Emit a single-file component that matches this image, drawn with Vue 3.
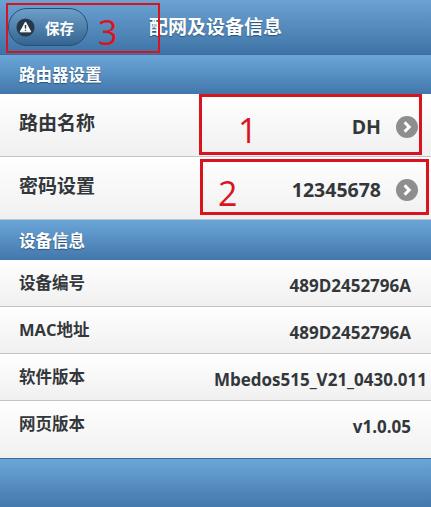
<template>
  <div class="page">
    <header class="top-bar">
      <button class="save-btn">
        <svg class="warn" viewBox="0 0 20 20" width="19" height="19">
          <circle cx="10" cy="10" r="9.5" fill="#26384c" />
          <path d="M10 4.2 15.6 14.6H4.4Z" fill="#fff" stroke="#fff" stroke-width="1" stroke-linejoin="round" />
          <path d="M10 7.4V11M10 12.3V13.5" stroke="#26384c" stroke-width="1.5" />
        </svg>
        <span>保存</span>
      </button>
      <h1>配网及设备信息</h1>
    </header>

    <div class="section">路由器设置</div>
    <div class="row big" v-for="item in routerRows" :key="item.label">
      <span class="label">{{ item.label }}</span>
      <span class="value">{{ item.value }}</span>
      <svg class="arrow" viewBox="0 0 22 22" width="22" height="22">
        <circle cx="11" cy="11" r="11" fill="#8e8e8e" />
        <path d="M8.6 6.4 13.2 11 8.6 15.6" fill="none" stroke="#fff" stroke-width="3" />
      </svg>
    </div>

    <div class="section second">设备信息</div>
    <div class="row small" v-for="item in deviceRows" :key="item.label" :class="item.cls">
      <span class="label">{{ item.label }}</span>
      <span class="value">{{ item.value }}</span>
    </div>

    <div class="footer"></div>

    <div class="mark mark-1"><span>1</span></div>
    <div class="mark mark-2"><span>2</span></div>
    <div class="mark mark-3"><span>3</span></div>
  </div>
</template>

<script setup>
const routerRows = [
  { label: '路由名称', value: 'DH' },
  { label: '密码设置', value: '12345678' }
]

const deviceRows = [
  { label: '设备编号', value: '489D2452796A' },
  { label: 'MAC地址', value: '489D2452796A' },
  { label: '软件版本', value: 'Mbedos515_V21_0430.011', cls: 'wide' },
  { label: '网页版本', value: 'v1.0.05', cls: 'last' }
]
</script>

<style>
html, body {
  margin: 0;
  background: #fff;
}
</style>

<style scoped>
.page {
  position: relative;
  width: 431px;
  height: 507px;
  overflow: hidden;
  font-family: "Open Sans", "Noto Sans CJK SC", sans-serif;
  font-weight: 700;
  color: #33373a;
}

.top-bar {
  height: 55px;
  box-sizing: border-box;
  padding-left: 8px;
  display: flex;
  align-items: center;
  background: linear-gradient(#6ba3d3, #3f73a6);
  border-bottom: 1px solid #3c6a99;
}

.top-bar h1 {
  margin: 0 0 2px 61px;
  font-size: 19px;
  font-weight: 700;
  color: #fff;
  text-shadow: 0 1px 1px #2d5478;
}

.save-btn {
  width: 80px;
  height: 38px;
  padding: 0 0 0 7px;
  display: flex;
  align-items: center;
  gap: 10px;
  border: 1px solid #24507c;
  border-radius: 19px;
  background: linear-gradient(#6d9fc9, #34648f);
  color: #fff;
  font: inherit;
  font-size: 14.5px;
}

.section {
  height: 39px;
  box-sizing: border-box;
  padding: 9px 0 0 19px;
  font-size: 16.5px;
  line-height: 22px;
  color: #fff;
  text-shadow: 0 1px 1px #2d5478;
  background: linear-gradient(#6ba6d8, #4277ab);
}

.section.second {
  height: 40px;
  padding-top: 10px;
}

.row {
  display: flex;
  align-items: center;
  box-sizing: border-box;
  padding-left: 19px;
  background: linear-gradient(#fff, #f0f0f0);
  border-bottom: 1px solid #c4c4c4;
}

.row.big {
  height: 63px;
  padding-right: 13px;
}

.row.big .label {
  font-size: 19px;
  padding-bottom: 6px;
}

.row.big .value {
  font-size: 19.5px;
  margin-right: 15px;
  padding-top: 3px;
}

.row.big .arrow {
  margin-top: 3px;
}

.row.small {
  height: 47px;
  padding-right: 20px;
  padding-bottom: 3px;
}

.row.small .label {
  font-size: 16.5px;
}

.row.small .value {
  font-size: 17px;
  padding-top: 8px;
}

.row.wide {
  padding-right: 4px;
}

.row.last {
  height: 58px;
  padding-bottom: 14px;
  border-bottom: 1px solid #3c6a99;
}

.value {
  margin-left: auto;
  white-space: nowrap;
}

.footer {
  height: 49px;
  background: linear-gradient(#6ba6d8, #4277ab);
}

.mark {
  position: absolute;
  box-sizing: border-box;
  border: 3px solid #d8141f;
  color: #d8141f;
  font-family: "Open Sans", sans-serif;
  font-weight: 400;
  font-size: 34px;
  line-height: 40px;
}

.mark span {
  position: absolute;
}

.mark-1 {
  left: 199px;
  top: 94px;
  width: 223px;
  height: 61px;
}

.mark-1 span {
  left: 36px;
  top: 13px;
}

.mark-2 {
  left: 200px;
  top: 159px;
  width: 229px;
  height: 56px;
}

.mark-2 span {
  left: 15px;
  top: 11px;
}

.mark-3 {
  left: 6px;
  top: 3px;
  width: 154px;
  height: 50px;
  border-width: 2px;
}

.mark-3 span {
  left: 90px;
  top: 7px;
}
</style>
